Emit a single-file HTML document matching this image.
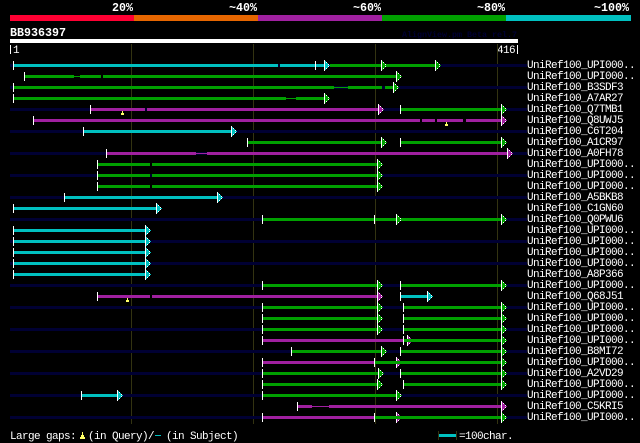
<!DOCTYPE html>
<html><head><meta charset="utf-8"><style>
html,body{margin:0;padding:0;background:#000;width:640px;height:443px;overflow:hidden}
svg{display:block}
rect{shape-rendering:crispEdges}
.n{fill:#000033}
.c{fill:#00c0c0}
.g{fill:#00a000}
.p{fill:#a020a0}
.t{fill:#fff}
.y{fill:#ffff66}
text{font-family:"Liberation Mono",monospace;font-size:11px;letter-spacing:-.6px;fill:#fff;white-space:pre}
.h{font-weight:bold;font-size:11.67px;letter-spacing:0;text-anchor:end}
</style></head><body>
<svg width="640" height="443" viewBox="0 0 640 443" xmlns="http://www.w3.org/2000/svg">
<defs>
<g id="a"><rect x="0" y="-5.5" width="1" height="11" fill="#fff"/><rect x="1" y="-4.5" width="1" height="9"/><rect x="2" y="-3.5" width="1" height="7" fill="#fff"/><rect x="2" y="-2.5" width="1" height="5"/><rect x="3" y="-2.5" width="1" height="5"/><rect x="4" y="-1.5" width="1" height="3" fill="#fff"/><rect x="4" y="-0.5" width="1" height="1"/><rect x="5" y="-0.5" width="1" height="1"/></g>
</defs>
<rect x="10" y="15" width="124" height="6" fill="#ff0033"/>
<rect x="134" y="15" width="124" height="6" fill="#e66600"/>
<rect x="258" y="15" width="124" height="6" fill="#a020a0"/>
<rect x="382" y="15" width="124" height="6" fill="#00a000"/>
<rect x="506" y="15" width="125" height="6" fill="#00c0c0"/>
<text class="h" x="133" y="11">20%</text>
<text class="h" x="257" y="11">~40%</text>
<text class="h" x="381" y="11">~60%</text>
<text class="h" x="505" y="11">~80%</text>
<text class="h" x="629" y="11">~100%</text>
<text class="h" x="10" y="36" style="text-anchor:start">BB936397</text>
<text x="402" y="37" style="font-size:8.33px;letter-spacing:0;font-weight:bold;fill:#000033">AlignView.pm Beta rel.7</text>
<rect x="10" y="39" width="508" height="4" fill="#fff"/>
<rect x="10" y="45" width="1" height="9" fill="#fff"/>
<text x="13" y="53">1</text>
<text x="497" y="53">416</text>
<rect x="517" y="45" width="1" height="9" fill="#fff"/>
<rect x="131" y="44" width="1" height="380" fill="#333311"/>
<rect x="253" y="44" width="1" height="380" fill="#333311"/>
<rect x="375" y="44" width="1" height="380" fill="#333311"/>
<rect x="497" y="44" width="1" height="380" fill="#333311"/>

<g><rect class="n" x="10" y="64" width="517" height="3"/><rect class="c" x="14" y="64" width="264" height="3"/><rect class="c" x="280" y="64" width="44" height="3"/><rect class="g" x="330" y="64" width="105" height="3"/><rect class="t" x="13" y="61" width="1" height="9"/><rect class="t" x="315" y="61" width="1" height="9"/><use href="#a" x="324" y="65.5" fill="#00c0c0"/><use href="#a" x="381" y="65.5" fill="#00a000"/><use href="#a" x="435" y="65.5" fill="#00a000"/><text x="527" y="68">UniRef100_UPI000..</text></g>
<g transform="translate(0,11)"><rect class="g" x="25" y="64" width="49" height="3"/><rect class="g" x="74" y="65" width="6" height="1"/><rect class="g" x="80" y="64" width="21" height="3"/><rect class="g" x="103" y="64" width="293" height="3"/><rect class="t" x="24" y="61" width="1" height="9"/><use href="#a" x="396" y="65.5" fill="#00a000"/><text x="527" y="68">UniRef100_UPI000..</text></g>
<g transform="translate(0,22)"><rect class="n" x="10" y="64" width="517" height="3"/><rect class="g" x="14" y="64" width="320" height="3"/><rect class="g" x="334" y="65" width="14" height="1"/><rect class="g" x="348" y="64" width="34" height="3"/><rect class="g" x="385" y="64" width="8" height="3"/><rect class="t" x="13" y="61" width="1" height="9"/><use href="#a" x="393" y="65.5" fill="#00a000"/><text x="527" y="68">UniRef100_B3SDF3</text></g>
<g transform="translate(0,33)"><rect class="g" x="14" y="64" width="272" height="3"/><rect class="g" x="286" y="65" width="10" height="1"/><rect class="g" x="296" y="64" width="28" height="3"/><rect class="t" x="13" y="61" width="1" height="9"/><use href="#a" x="324" y="65.5" fill="#00a000"/><text x="527" y="68">UniRef100_A7AR27</text></g>
<g transform="translate(0,44)"><rect class="n" x="10" y="64" width="517" height="3"/><rect class="p" x="91" y="64" width="54" height="3"/><rect class="p" x="147" y="64" width="231" height="3"/><rect class="g" x="401" y="64" width="100" height="3"/><rect class="t" x="90" y="61" width="1" height="9"/><rect class="t" x="400" y="61" width="1" height="9"/><use href="#a" x="378" y="65.5" fill="#a020a0"/><use href="#a" x="501" y="65.5" fill="#00a000"/><rect class="y" x="122" y="67" width="1" height="2"/><rect class="y" x="121" y="69" width="3" height="2"/><text x="527" y="68">UniRef100_Q7TMB1</text></g>
<g transform="translate(0,55)"><rect class="p" x="34" y="64" width="386" height="3"/><rect class="p" x="422" y="64" width="13" height="3"/><rect class="p" x="437" y="64" width="26" height="3"/><rect class="p" x="466" y="64" width="35" height="3"/><rect class="t" x="33" y="61" width="1" height="9"/><use href="#a" x="501" y="65.5" fill="#a020a0"/><rect class="y" x="446" y="67" width="1" height="2"/><rect class="y" x="445" y="69" width="3" height="2"/><text x="527" y="68">UniRef100_Q8UWJ5</text></g>
<g transform="translate(0,66)"><rect class="n" x="10" y="64" width="517" height="3"/><rect class="c" x="84" y="64" width="147" height="3"/><rect class="t" x="83" y="61" width="1" height="9"/><use href="#a" x="231" y="65.5" fill="#00c0c0"/><text x="527" y="68">UniRef100_C6T204</text></g>
<g transform="translate(0,77)"><rect class="g" x="248" y="64" width="133" height="3"/><rect class="g" x="401" y="64" width="100" height="3"/><rect class="t" x="247" y="61" width="1" height="9"/><rect class="t" x="400" y="61" width="1" height="9"/><use href="#a" x="381" y="65.5" fill="#00a000"/><use href="#a" x="501" y="65.5" fill="#00a000"/><text x="527" y="68">UniRef100_A1CR97</text></g>
<g transform="translate(0,88)"><rect class="n" x="10" y="64" width="517" height="3"/><rect class="p" x="107" y="64" width="89" height="3"/><rect class="p" x="196" y="65" width="11" height="1"/><rect class="p" x="207" y="64" width="300" height="3"/><rect class="t" x="106" y="61" width="1" height="9"/><use href="#a" x="507" y="65.5" fill="#a020a0"/><text x="527" y="68">UniRef100_A0FH78</text></g>
<g transform="translate(0,99)"><rect class="g" x="98" y="64" width="52" height="3"/><rect class="g" x="152" y="64" width="225" height="3"/><rect class="t" x="97" y="61" width="1" height="9"/><use href="#a" x="377" y="65.5" fill="#00a000"/><text x="527" y="68">UniRef100_UPI000..</text></g>
<g transform="translate(0,110)"><rect class="n" x="10" y="64" width="517" height="3"/><rect class="g" x="98" y="64" width="52" height="3"/><rect class="g" x="152" y="64" width="225" height="3"/><rect class="t" x="97" y="61" width="1" height="9"/><use href="#a" x="377" y="65.5" fill="#00a000"/><text x="527" y="68">UniRef100_UPI000..</text></g>
<g transform="translate(0,121)"><rect class="g" x="98" y="64" width="52" height="3"/><rect class="g" x="152" y="64" width="225" height="3"/><rect class="t" x="97" y="61" width="1" height="9"/><use href="#a" x="377" y="65.5" fill="#00a000"/><text x="527" y="68">UniRef100_UPI000..</text></g>
<g transform="translate(0,132)"><rect class="n" x="10" y="64" width="517" height="3"/><rect class="c" x="65" y="64" width="152" height="3"/><rect class="t" x="64" y="61" width="1" height="9"/><use href="#a" x="217" y="65.5" fill="#00c0c0"/><text x="527" y="68">UniRef100_A5BKB8</text></g>
<g transform="translate(0,143)"><rect class="c" x="14" y="64" width="142" height="3"/><rect class="t" x="13" y="61" width="1" height="9"/><use href="#a" x="156" y="65.5" fill="#00c0c0"/><text x="527" y="68">UniRef100_C1GN60</text></g>
<g transform="translate(0,154)"><rect class="n" x="10" y="64" width="517" height="3"/><rect class="g" x="263" y="64" width="238" height="3"/><rect class="t" x="262" y="61" width="1" height="9"/><rect class="t" x="374" y="61" width="1" height="9"/><use href="#a" x="396" y="65.5" fill="#00a000"/><use href="#a" x="501" y="65.5" fill="#00a000"/><text x="527" y="68">UniRef100_Q0PWU6</text></g>
<g transform="translate(0,165)"><rect class="c" x="14" y="64" width="131" height="3"/><rect class="t" x="13" y="61" width="1" height="9"/><use href="#a" x="145" y="65.5" fill="#00c0c0"/><text x="527" y="68">UniRef100_UPI000..</text></g>
<g transform="translate(0,176)"><rect class="n" x="10" y="64" width="517" height="3"/><rect class="c" x="14" y="64" width="131" height="3"/><rect class="t" x="13" y="61" width="1" height="9"/><use href="#a" x="145" y="65.5" fill="#00c0c0"/><text x="527" y="68">UniRef100_UPI000..</text></g>
<g transform="translate(0,187)"><rect class="c" x="14" y="64" width="131" height="3"/><rect class="t" x="13" y="61" width="1" height="9"/><use href="#a" x="145" y="65.5" fill="#00c0c0"/><text x="527" y="68">UniRef100_UPI000..</text></g>
<g transform="translate(0,198)"><rect class="n" x="10" y="64" width="517" height="3"/><rect class="c" x="14" y="64" width="131" height="3"/><rect class="t" x="13" y="61" width="1" height="9"/><use href="#a" x="145" y="65.5" fill="#00c0c0"/><text x="527" y="68">UniRef100_UPI000..</text></g>
<g transform="translate(0,209)"><rect class="c" x="14" y="64" width="131" height="3"/><rect class="t" x="13" y="61" width="1" height="9"/><use href="#a" x="145" y="65.5" fill="#00c0c0"/><text x="527" y="68">UniRef100_A8P366</text></g>
<g transform="translate(0,220)"><rect class="n" x="10" y="64" width="517" height="3"/><rect class="g" x="263" y="64" width="114" height="3"/><rect class="g" x="401" y="64" width="100" height="3"/><rect class="t" x="262" y="61" width="1" height="9"/><rect class="t" x="400" y="61" width="1" height="9"/><use href="#a" x="377" y="65.5" fill="#00a000"/><use href="#a" x="501" y="65.5" fill="#00a000"/><text x="527" y="68">UniRef100_UPI000..</text></g>
<g transform="translate(0,231)"><rect class="p" x="98" y="64" width="52" height="3"/><rect class="p" x="152" y="64" width="225" height="3"/><rect class="c" x="401" y="64" width="26" height="3"/><rect class="t" x="97" y="61" width="1" height="9"/><rect class="t" x="400" y="61" width="1" height="9"/><use href="#a" x="377" y="65.5" fill="#a020a0"/><use href="#a" x="427" y="65.5" fill="#00c0c0"/><rect class="y" x="127" y="67" width="1" height="2"/><rect class="y" x="126" y="69" width="3" height="2"/><text x="527" y="68">UniRef100_Q68J51</text></g>
<g transform="translate(0,242)"><rect class="n" x="10" y="64" width="517" height="3"/><rect class="g" x="263" y="64" width="114" height="3"/><rect class="g" x="404" y="64" width="97" height="3"/><rect class="t" x="262" y="61" width="1" height="9"/><rect class="t" x="403" y="61" width="1" height="9"/><use href="#a" x="377" y="65.5" fill="#00a000"/><use href="#a" x="501" y="65.5" fill="#00a000"/><text x="527" y="68">UniRef100_UPI000..</text></g>
<g transform="translate(0,253)"><rect class="g" x="263" y="64" width="114" height="3"/><rect class="g" x="404" y="64" width="97" height="3"/><rect class="t" x="262" y="61" width="1" height="9"/><rect class="t" x="403" y="61" width="1" height="9"/><use href="#a" x="377" y="65.5" fill="#00a000"/><use href="#a" x="501" y="65.5" fill="#00a000"/><text x="527" y="68">UniRef100_UPI000..</text></g>
<g transform="translate(0,264)"><rect class="n" x="10" y="64" width="517" height="3"/><rect class="g" x="263" y="64" width="114" height="3"/><rect class="g" x="404" y="64" width="97" height="3"/><rect class="t" x="262" y="61" width="1" height="9"/><rect class="t" x="403" y="61" width="1" height="9"/><use href="#a" x="377" y="65.5" fill="#00a000"/><use href="#a" x="501" y="65.5" fill="#00a000"/><text x="527" y="68">UniRef100_UPI000..</text></g>
<g transform="translate(0,275)"><use href="#a" x="407" y="65.5" fill="#a020a0"/><rect class="p" x="263" y="64" width="140" height="3"/><rect class="g" x="404" y="64" width="97" height="3"/><rect class="t" x="262" y="61" width="1" height="9"/><rect class="t" x="403" y="61" width="1" height="9"/><use href="#a" x="501" y="65.5" fill="#00a000"/><text x="527" y="68">UniRef100_UPI000..</text></g>
<g transform="translate(0,286)"><rect class="n" x="10" y="64" width="517" height="3"/><rect class="g" x="292" y="64" width="89" height="3"/><rect class="g" x="401" y="64" width="100" height="3"/><rect class="t" x="291" y="61" width="1" height="9"/><rect class="t" x="400" y="61" width="1" height="9"/><use href="#a" x="381" y="65.5" fill="#00a000"/><use href="#a" x="501" y="65.5" fill="#00a000"/><text x="527" y="68">UniRef100_B8MI72</text></g>
<g transform="translate(0,297)"><use href="#a" x="396" y="65.5" fill="#a020a0"/><rect class="p" x="263" y="64" width="111" height="3"/><rect class="g" x="375" y="64" width="126" height="3"/><rect class="t" x="262" y="61" width="1" height="9"/><rect class="t" x="374" y="61" width="1" height="9"/><use href="#a" x="501" y="65.5" fill="#00a000"/><text x="527" y="68">UniRef100_UPI000..</text></g>
<g transform="translate(0,308)"><rect class="n" x="10" y="64" width="517" height="3"/><rect class="g" x="263" y="64" width="115" height="3"/><rect class="g" x="401" y="64" width="100" height="3"/><rect class="t" x="262" y="61" width="1" height="9"/><rect class="t" x="400" y="61" width="1" height="9"/><use href="#a" x="378" y="65.5" fill="#00a000"/><use href="#a" x="501" y="65.5" fill="#00a000"/><text x="527" y="68">UniRef100_A2VD29</text></g>
<g transform="translate(0,319)"><rect class="g" x="263" y="64" width="114" height="3"/><rect class="g" x="404" y="64" width="97" height="3"/><rect class="t" x="262" y="61" width="1" height="9"/><rect class="t" x="403" y="61" width="1" height="9"/><use href="#a" x="377" y="65.5" fill="#00a000"/><use href="#a" x="501" y="65.5" fill="#00a000"/><text x="527" y="68">UniRef100_UPI000..</text></g>
<g transform="translate(0,330)"><rect class="n" x="10" y="64" width="517" height="3"/><rect class="c" x="82" y="64" width="35" height="3"/><rect class="g" x="263" y="64" width="133" height="3"/><rect class="t" x="81" y="61" width="1" height="9"/><rect class="t" x="262" y="61" width="1" height="9"/><use href="#a" x="117" y="65.5" fill="#00c0c0"/><use href="#a" x="396" y="65.5" fill="#00a000"/><text x="527" y="68">UniRef100_UPI000..</text></g>
<g transform="translate(0,341)"><rect class="p" x="298" y="64" width="14" height="3"/><rect class="p" x="312" y="65" width="17" height="1"/><rect class="p" x="329" y="64" width="172" height="3"/><rect class="t" x="297" y="61" width="1" height="9"/><use href="#a" x="501" y="65.5" fill="#a020a0"/><text x="527" y="68">UniRef100_C5KRI5</text></g>
<g transform="translate(0,352)"><rect class="n" x="10" y="64" width="517" height="3"/><use href="#a" x="396" y="65.5" fill="#a020a0"/><rect class="p" x="263" y="64" width="111" height="3"/><rect class="g" x="375" y="64" width="126" height="3"/><rect class="t" x="262" y="61" width="1" height="9"/><rect class="t" x="374" y="61" width="1" height="9"/><use href="#a" x="501" y="65.5" fill="#00a000"/><text x="527" y="68">UniRef100_UPI000..</text></g>

<text x="10" y="439">Large gaps:</text>
<rect class="y" x="82" y="432" width="1" height="3"/><rect class="y" x="81" y="435" width="3" height="2"/><rect class="y" x="80" y="437" width="5" height="2"/>
<text x="88" y="439">(in Query)/</text>
<rect x="155" y="435" width="6" height="1" fill="#00c0c0"/>
<text x="166" y="439">(in Subject)</text>
<rect x="438" y="431" width="1" height="9" fill="#333311"/>
<rect x="456" y="431" width="1" height="9" fill="#333311"/>
<rect x="439" y="434" width="17" height="3" fill="#00c0c0"/>
<text x="459" y="439">=100char.</text>
</svg>
</body></html>
